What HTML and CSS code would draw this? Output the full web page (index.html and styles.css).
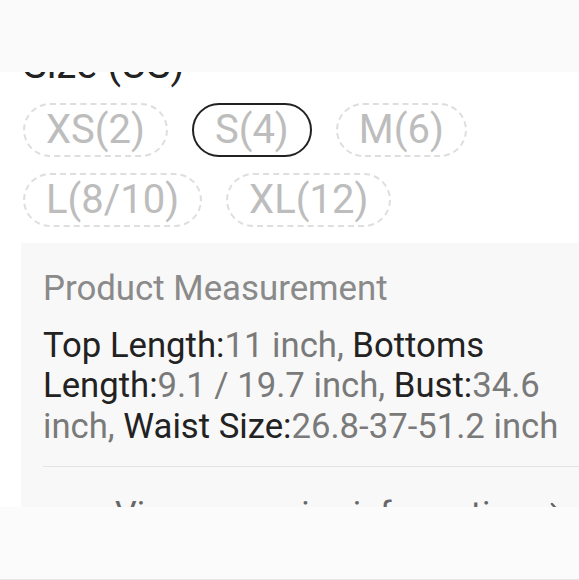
FILE: index.html
```html
<!DOCTYPE html>
<html lang="en">
<head>
<meta charset="utf-8">
<title>Size</title>
<link rel="stylesheet" href="styles.css">
</head>
<body>
<header class="topbar"></header>
<main class="page">
  <section class="size-section">
    <h2 class="size-title">Size (US)</h2>
    <div class="chips">
      <span class="chip">XS(2)</span>
      <span class="chip chip-selected">S(4)</span>
      <span class="chip">M(6)</span>
      <span class="chip">L(8/10)</span>
      <span class="chip">XL(12)</span>
    </div>
  </section>
  <section class="measure">
    <h3 class="measure-title">Product Measurement</h3>
    <p class="measure-text"><span class="label">Top Length:</span><span class="val">11 inch,</span> <span class="label">Bottoms Length:</span><span class="val">9.1 / 19.7 inch,</span> <span class="label">Bust:</span><span class="val">34.6 inch,</span> <span class="label">Waist Size:</span><span class="val">26.8-37-51.2 inch</span></p>
    <div class="divider"></div>
    <div class="more-row">
      <span class="more-text">View more size information</span>
      <svg class="more-arrow" width="12" height="22" viewBox="0 0 12 22"><path d="M2 2 L10 11 L2 20" fill="none" stroke="#666" stroke-width="2.5" stroke-linecap="round" stroke-linejoin="round"/></svg>
    </div>
  </section>
</main>
<footer class="bottombar"></footer>
</body>
</html>
```
FILE: styles.css
```css
* { box-sizing: border-box; }
html, body {
  margin: 0;
  padding: 0;
  background: #ffffff;
  width: 579px;
  height: 580px;
  overflow: hidden;
}
body {
  font-family: Roboto, "Noto Sans", sans-serif;
  color: #222222;
}
.topbar {
  position: fixed;
  left: 0;
  top: 0;
  width: 100%;
  height: 72px;
  background: #fafafa;
  z-index: 2;
}
.bottombar {
  position: fixed;
  left: 0;
  bottom: 0;
  width: 100%;
  height: 73px;
  background: #fbfbfb;
  border-bottom: 1px solid #e6e6e6;
  z-index: 2;
}
.page {
  padding: 41px 0 0 21px;
}
.size-section {
  padding-left: 2px;
}
.size-title {
  margin: 0;
  font-size: 40px;
  font-weight: 400;
  line-height: 47px;
  color: #222222;
}
.chips {
  margin-top: 15px;
  display: flex;
  flex-wrap: wrap;
  gap: 16px 24px;
  width: 600px;
}
.chip {
  display: inline-block;
  height: 54px;
  padding: 0 21px;
  border: 2px dashed #dedede;
  border-radius: 27px;
  font-size: 40px;
  line-height: 50px;
  color: #bdbdbd;
  white-space: nowrap;
}
.chip-selected {
  border: 2px solid #222222;
}
.measure {
  margin-top: 16px;
  background: #f8f8f8;
  padding: 25px 0 0 22px;
  height: 300px;
}
.measure-title {
  margin: 0;
  font-size: 34.8px;
  font-weight: 400;
  line-height: 40.5px;
  color: #8a8a8a;
}
.measure-text {
  margin: 16px 0 0 0;
  font-size: 34.7px;
  line-height: 40.5px;
}
.label { color: #222222; }
.val { color: #7a7a7a; }
.divider {
  margin-top: 20px;
  height: 1px;
  background: #e4e4e4;
}
.more-row {
  margin-top: 26px;
  padding-left: 72px;
  display: flex;
  align-items: center;
  gap: 22px;
}
.more-text {
  font-size: 34px;
  line-height: 40px;
  color: #666666;
}
.more-arrow {
  flex: none;
}
```
